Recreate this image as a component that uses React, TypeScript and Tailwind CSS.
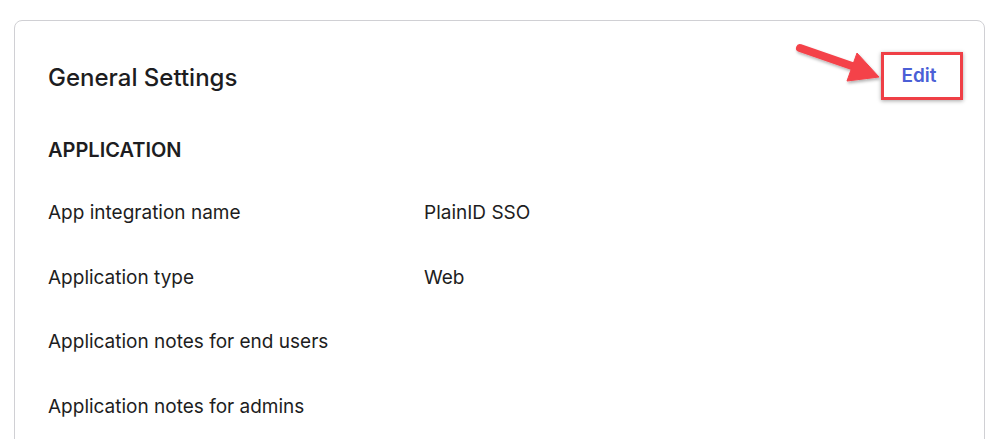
import React from "react";

const rows = [
  { label: "App integration name", value: "PlainID SSO" },
  { label: "Application type", value: "Web" },
  { label: "Application notes for end users", value: "" },
  { label: "Application notes for admins", value: "" },
];

function Arrow() {
  return (
    <svg
      className="absolute left-[790px] top-[38px] pointer-events-none"
      width="100"
      height="55"
      viewBox="0 0 100 55"
    >
      <defs>
        <filter id="sh" x="-20%" y="-20%" width="140%" height="160%">
          <feDropShadow dx="1" dy="2" stdDeviation="1.5" floodColor="#000" floodOpacity="0.3" />
        </filter>
      </defs>
      <g filter="url(#sh)" fill="#f4424a" stroke="#f4424a">
        <line x1="10" y1="10" x2="62" y2="28" strokeWidth="8" strokeLinecap="round" />
        <polygon points="67,15 89,39 57,43" strokeWidth="1" strokeLinejoin="round" />
      </g>
    </svg>
  );
}

export default function App() {
  return (
    <div className="relative min-h-[439px] bg-white pt-5 pl-[14px] pr-[18px] font-['Inter',sans-serif] text-[#1d1d21]">
      <div className="rounded-lg border border-[#d0d0d4] px-[33px] pb-10">
        <div className="flex items-center justify-between pt-[31px]">
          <h2 className="mt-[3px] text-[24px] font-medium leading-[30px]">General Settings</h2>
          <div className="-mr-[12px] flex h-[48px] w-[82px] items-center justify-center border-[3px] border-[#ef3f46] pr-[6px] shadow-[0_1px_4px_rgba(0,0,0,0.35)]">
            <span className="text-[19px] font-semibold text-[#4b5fd6] leading-[22px]">Edit</span>
          </div>
        </div>
        <h3 className="mt-[37px] mb-[18px] text-[20px] font-semibold leading-[26px]">APPLICATION</h3>
        <div className="flex flex-col">
          {rows.map((r) => (
            <div key={r.label} className="grid h-[64.5px] grid-cols-[376px_1fr] items-center text-[19px]">
              <span>{r.label}</span>
              <span>{r.value}</span>
            </div>
          ))}
        </div>
      </div>
      <Arrow />
    </div>
  );
}
